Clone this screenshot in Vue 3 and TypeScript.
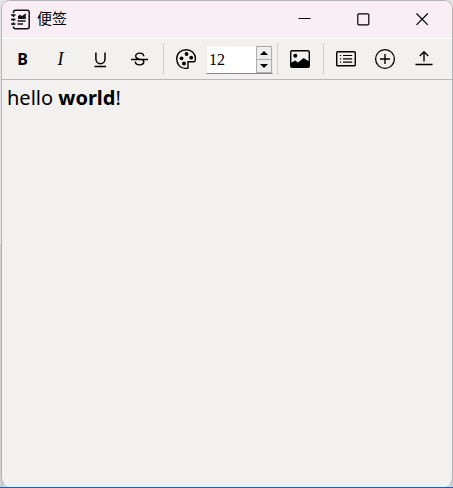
<script setup lang="ts">
import { ref } from 'vue'

const fontSize = ref<number>(12)

function step(delta: number): void {
  fontSize.value = Math.max(1, fontSize.value + delta)
}

function format(command: string): void {
  document.execCommand(command)
}
</script>

<template>
  <div class="window">
    <header class="titlebar">
      <svg class="app-icon" viewBox="0 0 20 22" aria-hidden="true">
        <rect x="3.5" y="1.3" width="15.7" height="18.4" rx="2" fill="none" stroke="#111" stroke-width="1.5" />
        <path d="M3.5 4V18" stroke="#f9eef3" stroke-width="2.4" stroke-dasharray="1.6 2.4" />
        <path d="M1 6H5.5M1 10.5H5.5M1 15H5.5" stroke="#111" stroke-width="1.7" />
        <path d="M8 10V6.9L10 5.8L12 7.1L15.8 4.3V10Z" fill="#111" />
        <path d="M7.5 12H15.5M7.5 15H13" stroke="#111" stroke-width="1.5" />
      </svg>
      <h1 class="title">便签</h1>
      <div class="controls">
        <button type="button" class="control" aria-label="最小化">
          <svg viewBox="0 0 13 13"><path d="M0.5 5.5H12.5" /></svg>
        </button>
        <button type="button" class="control" aria-label="最大化">
          <svg viewBox="0 0 13 13"><rect x="0.8" y="0.8" width="11" height="11" rx="1" /></svg>
        </button>
        <button type="button" class="control" aria-label="关闭">
          <svg viewBox="0 0 13 13"><path d="M0.5 0.5L11.8 11.8M11.8 0.5L0.5 11.8" /></svg>
        </button>
      </div>
    </header>

    <div class="toolbar" role="toolbar">
      <button type="button" class="tool bold" aria-label="加粗" @click="format('bold')">B</button>
      <button type="button" class="tool italic" aria-label="斜体" @click="format('italic')">I</button>
      <button type="button" class="tool" aria-label="下划线" @click="format('underline')">
        <svg viewBox="0 0 22 22">
          <path d="M6.9 4.5V11C6.9 17.3 16 17.3 16 11V4.5M5.5 18.5H17" stroke-width="1.5" />
        </svg>
      </button>
      <button type="button" class="tool" aria-label="删除线" @click="format('strikeThrough')">
        <svg viewBox="0 0 22 22">
          <path d="M15.8 8.3C15.5 4 7.9 4.2 7.7 8C7.6 9.8 9.1 10.6 11.5 11.1C14.7 11.7 16.1 12.6 15.8 14.2C15.2 18 7.6 17.8 7.3 13.6M3 11.5H20" stroke-width="1.4" />
        </svg>
      </button>
      <span class="separator" />
      <button type="button" class="tool" aria-label="颜色">
        <svg viewBox="0 0 22 22">
          <path d="M13 20.1C4.6 21.6 1.7 15.8 1.7 10.6C1.9 5 6.3 1.7 11.2 1.7C16.4 1.7 20.4 5.8 20.4 10.3C20.4 13.6 20 13.8 18 13.7H13V16.7Z" stroke-width="1.4" />
          <g fill="#000" stroke="none">
            <circle cx="11.5" cy="6" r="1.9" /><circle cx="6.5" cy="10.3" r="1.9" />
            <circle cx="16.2" cy="9.7" r="1.9" /><circle cx="9" cy="15.5" r="1.9" />
          </g>
        </svg>
      </button>
      <div class="spinbox">
        <input v-model.number="fontSize" class="size" type="number" min="1" aria-label="字号">
        <div class="steps">
          <button type="button" class="step" aria-label="增大" @click="step(1)">
            <svg viewBox="0 0 8 4"><path d="M0 4L4 0L8 4Z" /></svg>
          </button>
          <button type="button" class="step" aria-label="减小" @click="step(-1)">
            <svg viewBox="0 0 8 4"><path d="M0 0L4 4L8 0Z" /></svg>
          </button>
        </div>
      </div>
      <span class="separator" />
      <button type="button" class="tool" aria-label="插入图片">
        <svg viewBox="0 0 22 22">
          <rect x="1.7" y="2.7" width="18.6" height="16.6" rx="1.6" stroke-width="1.4" />
          <circle cx="6.3" cy="7.7" r="2" fill="#000" stroke="none" />
          <path d="M1.5 15.3L6 12.6L9 14.4L14.6 10L20.5 13.7V18.5L19.5 19.5H2.5L1.5 18.5Z" fill="#000" stroke="none" />
        </svg>
      </button>
      <span class="separator" />
      <button type="button" class="tool" aria-label="列表">
        <svg viewBox="0 0 22 22">
          <rect x="1.7" y="3.8" width="18.6" height="14" rx="1" stroke-width="1.4" />
          <path d="M5 7.5H6.2M5 10.8H6.2M5 14.2H6.2M8 7.5H17.2M8 10.8H17.2M8 14.2H17.2" stroke-width="1.2" />
        </svg>
      </button>
      <button type="button" class="tool" aria-label="新建">
        <svg viewBox="0 0 22 22">
          <circle cx="11" cy="11" r="9.4" stroke-width="1.3" />
          <path d="M11 6V16M6 11H16" stroke-width="1.4" />
        </svg>
      </button>
      <button type="button" class="tool" aria-label="置顶">
        <svg viewBox="0 0 22 22">
          <path d="M11 13.5V4M6.8 8L11 3.8L15.2 8" stroke-width="1.4" />
          <path d="M2.5 16.5H19.5" stroke-width="1.3" />
        </svg>
      </button>
    </div>

    <div class="editor" role="textbox" aria-multiline="true" aria-label="便签内容" contenteditable="true" spellcheck="false">hello <b>world</b>!</div>
  </div>
</template>

<style>
html {
  min-height: 100vh;
  background: linear-gradient(#e4e4e4 50%, #d0d0d0 50%, #d0d0d0 calc(100% - 1px), #1763ad calc(100% - 1px));
}

body {
  margin: 0;
}
</style>

<style scoped>
.window {
  box-sizing: border-box;
  display: flex;
  flex-direction: column;
  min-height: calc(100vh - 1px);
  margin: 0 0 1px 1px;
  border: 1px solid #b4b4b4;
  border-bottom-color: #f2f1ef;
  border-radius: 9px;
  overflow: hidden;
  background: #f2f1ef;
  color: #000;
  font-family: "Noto Sans", "Noto Sans CJK SC", sans-serif;
}

.titlebar {
  display: flex;
  align-items: center;
  height: 37px;
  padding-left: 8px;
  background: #f9eef3;
  border-bottom: 1px solid #fff;
}

.app-icon {
  width: 20px;
  height: 22px;
}

.title {
  flex: 1;
  margin: 0 0 0 7px;
  padding-bottom: 3px;
  font: 15px/20px "Noto Sans CJK SC", sans-serif;
}

.controls {
  display: flex;
  align-self: stretch;
}

button {
  display: flex;
  align-items: center;
  justify-content: center;
  margin: 0;
  padding: 0;
  border: 0;
  background: none;
  color: #000;
}

.control {
  width: 59px;
}

.control svg {
  width: 13px;
  height: 13px;
  fill: none;
  stroke: #000;
  stroke-width: 1.2;
}

.toolbar {
  display: flex;
  align-items: center;
  height: 40px;
  border-bottom: 1px solid #b9b9b9;
}

.tool {
  width: 39px;
  height: 36px;
}

.bold {
  padding-left: 2px;
  font: bold 16px/20px "Noto Sans", sans-serif;
}

.italic {
  font: italic 18px/20px "Liberation Serif", serif;
}

.tool svg {
  width: 22px;
  height: 22px;
  fill: none;
  stroke: #000;
}

.separator {
  width: 1px;
  height: 32px;
  margin: 0 2px 0 4px;
  background: #d0d0ce;
}

.tool + .separator:first-of-type {
  margin-left: 5px;
}

.spinbox {
  box-sizing: border-box;
  display: flex;
  width: 67px;
  height: 29px;
  margin-left: 1px;
  border: 1px solid #ececec;
  border-bottom-color: #868686;
  background: #fff;
}

.size {
  flex: 1;
  min-width: 0;
  padding: 0 0 0 2px;
  border: 0;
  outline: 0;
  background: none;
  color: #000;
  font: 16px/27px "Liberation Serif", serif;
  appearance: textfield;
}

.size::-webkit-inner-spin-button {
  appearance: none;
  margin: 0;
}

.steps {
  display: flex;
  flex-direction: column;
  width: 16px;
}

.step {
  flex: 1;
  border: 1px solid #adadad;
  background: #ececec;
}

.step + .step {
  border-top: 0;
}

.step svg {
  width: 8px;
  height: 4px;
  fill: #000;
}

.editor {
  flex: 1;
  padding: 4px 5px;
  outline: 0;
  font-size: 20px;
  line-height: 28px;
}
</style>
